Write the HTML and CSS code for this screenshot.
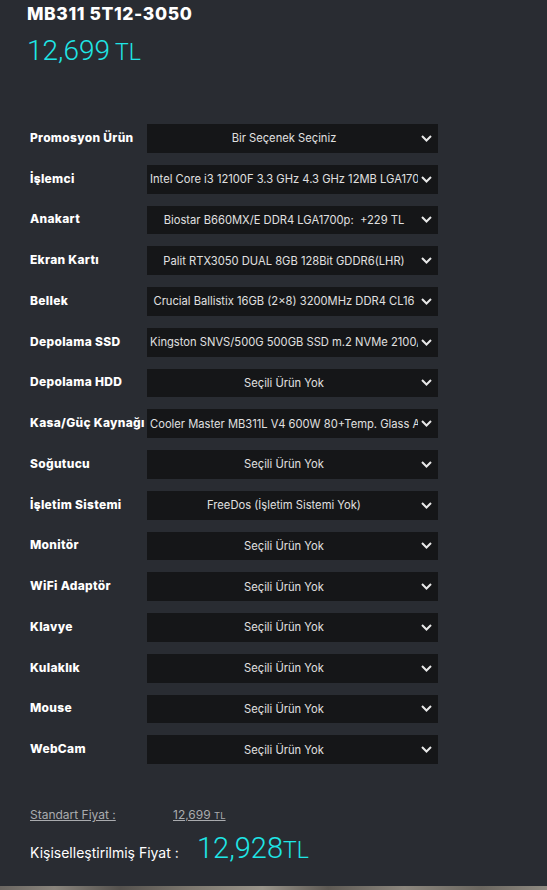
FILE: index.html
```html
<!DOCTYPE html>
<html lang="tr">
<head>
<meta charset="utf-8">
<title>MB311 5T12-3050</title>
<link rel="stylesheet" href="styles.css">
</head>
<body>
<main class="page">
  <header class="head">
    <h1 class="title">MB311 5T12-3050</h1>
    <div class="price"><span class="price-num">12,699</span> <span class="price-cur">TL</span></div>
  </header>

  <section class="config">
    <div class="label">Promosyon Ürün</div>
    <div class="select"><span class="sel-text">Bir Seçenek Seçiniz</span><svg class="chev" viewBox="0 0 11 7"><path d="M1 1 L5.5 5.5 L10 1"/></svg></div>

    <div class="label">İşlemci</div>
    <div class="select"><span class="sel-text">Intel Core i3 12100F 3.3 GHz 4.3 GHz 12MB LGA1700p</span><svg class="chev" viewBox="0 0 11 7"><path d="M1 1 L5.5 5.5 L10 1"/></svg></div>

    <div class="label">Anakart</div>
    <div class="select"><span class="sel-text">Biostar B660MX/E DDR4 LGA1700p: &nbsp;+229 TL</span><svg class="chev" viewBox="0 0 11 7"><path d="M1 1 L5.5 5.5 L10 1"/></svg></div>

    <div class="label">Ekran Kartı</div>
    <div class="select"><span class="sel-text">Palit RTX3050 DUAL 8GB 128Bit GDDR6(LHR)</span><svg class="chev" viewBox="0 0 11 7"><path d="M1 1 L5.5 5.5 L10 1"/></svg></div>

    <div class="label">Bellek</div>
    <div class="select"><span class="sel-text">Crucial Ballistix 16GB (2x8) 3200MHz DDR4 CL16</span><svg class="chev" viewBox="0 0 11 7"><path d="M1 1 L5.5 5.5 L10 1"/></svg></div>

    <div class="label">Depolama SSD</div>
    <div class="select"><span class="sel-text">Kingston SNVS/500G 500GB SSD m.2 NVMe 2100/1700</span><svg class="chev" viewBox="0 0 11 7"><path d="M1 1 L5.5 5.5 L10 1"/></svg></div>

    <div class="label">Depolama HDD</div>
    <div class="select"><span class="sel-text">Seçili Ürün Yok</span><svg class="chev" viewBox="0 0 11 7"><path d="M1 1 L5.5 5.5 L10 1"/></svg></div>

    <div class="label">Kasa/Güç Kaynağı</div>
    <div class="select"><span class="sel-text">Cooler Master MB311L V4 600W 80+Temp. Glass ARGB</span><svg class="chev" viewBox="0 0 11 7"><path d="M1 1 L5.5 5.5 L10 1"/></svg></div>

    <div class="label">Soğutucu</div>
    <div class="select"><span class="sel-text">Seçili Ürün Yok</span><svg class="chev" viewBox="0 0 11 7"><path d="M1 1 L5.5 5.5 L10 1"/></svg></div>

    <div class="label">İşletim Sistemi</div>
    <div class="select"><span class="sel-text">FreeDos (İşletim Sistemi Yok)</span><svg class="chev" viewBox="0 0 11 7"><path d="M1 1 L5.5 5.5 L10 1"/></svg></div>

    <div class="label">Monitör</div>
    <div class="select"><span class="sel-text">Seçili Ürün Yok</span><svg class="chev" viewBox="0 0 11 7"><path d="M1 1 L5.5 5.5 L10 1"/></svg></div>

    <div class="label">WiFi Adaptör</div>
    <div class="select"><span class="sel-text">Seçili Ürün Yok</span><svg class="chev" viewBox="0 0 11 7"><path d="M1 1 L5.5 5.5 L10 1"/></svg></div>

    <div class="label">Klavye</div>
    <div class="select"><span class="sel-text">Seçili Ürün Yok</span><svg class="chev" viewBox="0 0 11 7"><path d="M1 1 L5.5 5.5 L10 1"/></svg></div>

    <div class="label">Kulaklık</div>
    <div class="select"><span class="sel-text">Seçili Ürün Yok</span><svg class="chev" viewBox="0 0 11 7"><path d="M1 1 L5.5 5.5 L10 1"/></svg></div>

    <div class="label">Mouse</div>
    <div class="select"><span class="sel-text">Seçili Ürün Yok</span><svg class="chev" viewBox="0 0 11 7"><path d="M1 1 L5.5 5.5 L10 1"/></svg></div>

    <div class="label">WebCam</div>
    <div class="select"><span class="sel-text">Seçili Ürün Yok</span><svg class="chev" viewBox="0 0 11 7"><path d="M1 1 L5.5 5.5 L10 1"/></svg></div>
  </section>

  <section class="totals">
    <div class="std-row">
      <span class="std-label">Standart Fiyat :</span>
      <span class="std-price">12,699 <span class="std-cur">TL</span></span>
    </div>
    <div class="custom-row">
      <span class="custom-label">Kişiselleştirilmiş Fiyat :</span>
      <span class="custom-price">12,928<span class="custom-cur">TL</span></span>
    </div>
  </section>
  <div class="photo-strip"></div>
</main>
</body>
</html>
```

FILE: styles.css
```css
* { box-sizing: border-box; }

html, body {
  margin: 0;
  padding: 0;
  background: #292c32;
}

body {
  font-family: "Inter", "Roboto", "DejaVu Sans", sans-serif;
  color: #fff;
  height: 890px;
  overflow: hidden;
}

.page {
  display: flex;
  flex-direction: column;
  height: 890px;
}

.head {
  padding: 3px 0 0 27px;
}

.title {
  margin: 0;
  font-size: 17.5px;
  font-weight: 800;
  line-height: 22px;
  letter-spacing: 0.6px;
  color: #fff;
}

.price {
  margin-top: 11px;
  color: #1fe6e6;
  font-family: "Roboto", sans-serif;
  font-weight: 300;
  line-height: 30px;
}

.price-num { font-size: 28px; }
.price-cur { font-size: 23px; margin-left: 1px; }

.config {
  margin-top: 54px;
  padding-left: 30px;
  display: grid;
  grid-template-columns: 117px 291px;
  grid-auto-rows: 28.75px;
  row-gap: 12px;
  align-items: center;
}

.label {
  font-size: 12px;
  font-weight: 800;
  letter-spacing: 0.3px;
  color: #fff;
  white-space: nowrap;
  margin-top: -2px;
}

.select {
  position: relative;
  height: 100%;
  background: #151618;
  display: flex;
  align-items: center;
  padding: 0 20px 0 3px;
}

.sel-text {
  flex: 1;
  min-width: 0;
  overflow: hidden;
  white-space: nowrap;
  text-align: center;
  font-size: 11.2px;
  color: #e0e0e0;
}

.chev {
  position: absolute;
  right: 6px;
  top: 50%;
  width: 11px;
  height: 7px;
  margin-top: -3.5px;
  fill: none;
  stroke: #e8e8e8;
  stroke-width: 2;
}

.totals {
  margin-top: 43px;
  padding-left: 30px;
}

.std-row {
  display: flex;
  font-size: 12px;
  color: #a9abae;
}

.std-label {
  width: 143px;
  text-decoration: underline;
}

.std-price {
  text-decoration: underline;
}

.std-cur { font-size: 9.5px; }

.custom-row {
  display: flex;
  align-items: baseline;
  margin-top: 9px;
}

.custom-label {
  font-size: 14px;
  color: #fff;
  width: 167px;
}

.custom-price {
  font-family: "Roboto", sans-serif;
  font-weight: 300;
  font-size: 29px;
  color: #1fe6e6;
}

.custom-cur { font-size: 23px; }

.photo-strip {
  margin-top: auto;
  height: 4px;
  background: linear-gradient(90deg, #6a6661 0%, #8a857d 10%, #55524e 22%, #7d786f 35%, #9a958b 48%, #5e5a54 60%, #8c877e 74%, #6b6760 88%, #908b82 100%);
}
```
